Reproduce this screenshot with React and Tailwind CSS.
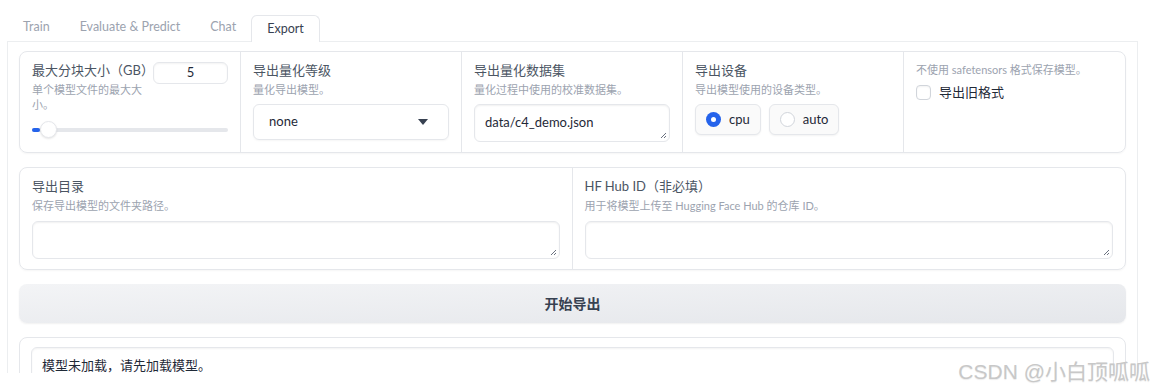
const font = "font-['Lato','Noto_Sans_CJK_SC',sans-serif]";

function Label({ title, info }) {
  return (
    <div>
      <p className="text-[13px] leading-[18px] text-[#4b5563]">{title}</p>
      {info && <p className="mt-[3px] text-[11px] leading-[15px] text-[#9ca3af]">{info}</p>}
    </div>
  );
}

function TextBox({ value, h = 'h-[38px]' }) {
  return (
    <div className={`relative ${h} rounded-md border border-[#e5e7eb] bg-white shadow-[inset_0_1px_2px_rgba(0,0,0,0.06)] px-[10px] flex items-center text-[13px] text-[#1f2937]`}>
      {value}
      <svg className="absolute right-[2px] bottom-[2px]" width="7" height="7" viewBox="0 0 7 7">
        <path d="M6 1L1 6M6 4L4 6" stroke="#6b7280" strokeWidth="1" />
      </svg>
    </div>
  );
}

function Radio({ label, checked }) {
  return (
    <div className="flex items-center gap-[8px] h-[31px] px-[10px] rounded-md border border-[#e5e7eb] bg-[#fafafa] shadow-[0_1px_2px_rgba(0,0,0,0.05)] text-[13px] text-[#1f2937]">
      {checked ? (
        <span className="w-[15px] h-[15px] rounded-full bg-[#2563eb] flex items-center justify-center">
          <span className="w-[5px] h-[5px] rounded-full bg-white" />
        </span>
      ) : (
        <span className="w-[15px] h-[15px] rounded-full border border-[#d1d5db] bg-white" />
      )}
      {label}
    </div>
  );
}

export default function App() {
  return (
    <div className={`relative w-[1159px] h-[391px] bg-white overflow-hidden ${font}`}>
      <div className="h-[373px] overflow-hidden">
        {/* tabs */}
        <div className="flex items-end h-[41px] pl-[8px]">
          <span className="px-[15px] h-[27px] flex items-center text-[12.5px] text-[#9ca3af]">Train</span>
          <span className="px-[15px] h-[27px] flex items-center text-[12.5px] text-[#9ca3af]">Evaluate &amp; Predict</span>
          <span className="px-[15px] h-[27px] flex items-center text-[12.5px] text-[#9ca3af]">Chat</span>
          <span className="relative top-[1px] px-[15px] h-[27px] flex items-center rounded-t-md border border-b-0 border-[#e5e7eb] bg-white text-[12.5px] text-[#374151]">Export</span>
        </div>

        <div className="ml-[7px] w-[1131px] h-[400px] border-l border-t border-r border-[#eceef0] px-[11px] pt-[9px] flex flex-col gap-[14px]">
          {/* row 1 */}
          <div className="grid grid-cols-5 h-[102px] rounded-lg border border-[#e5e7eb] shadow-[0_1px_2px_rgba(0,0,0,0.04)] divide-x divide-[#e5e7eb]">
            <div className="px-[12px] pt-[9px] flex flex-col">
              <div className="flex justify-between">
                <div className="w-[118px]">
                  <Label title="最大分块大小（GB）" info="单个模型文件的最大大小。" />
                </div>
                <div className="w-[75px] h-[22px] mt-[1px] rounded-md border border-[#e5e7eb] shadow-[inset_0_1px_2px_rgba(0,0,0,0.05)] flex items-center justify-center text-[13px] text-[#1f2937]">5</div>
              </div>
              <div className="relative mt-[16px] h-[4px] rounded-full bg-[#e5e7eb]">
                <div className="absolute left-0 top-0 h-[4px] w-[8px] rounded-full bg-[#2563eb]" />
                <div className="absolute left-[8px] top-[-7px] w-[17px] h-[17px] rounded-full bg-white border border-[#e5e7eb] shadow-[0_1px_2px_rgba(0,0,0,0.1)]" />
              </div>
            </div>
            <div className="px-[12px] pt-[9px] flex flex-col gap-[7px]">
              <Label title="导出量化等级" info="量化导出模型。" />
              <div className="h-[36px] rounded-md border border-[#e5e7eb] shadow-[0_1px_2px_rgba(0,0,0,0.04)] flex items-center justify-between pl-[15px] pr-[20px] text-[13px] text-[#1f2937]">
                none
                <svg width="10" height="6" viewBox="0 0 10 6"><path d="M0 0h10L5 6z" fill="#374151" /></svg>
              </div>
            </div>
            <div className="px-[12px] pt-[9px] flex flex-col gap-[7px]">
              <Label title="导出量化数据集" info="量化过程中使用的校准数据集。" />
              <TextBox value="data/c4_demo.json" />
            </div>
            <div className="px-[12px] pt-[9px] flex flex-col gap-[7px]">
              <Label title="导出设备" info="导出模型使用的设备类型。" />
              <div className="flex gap-[8px]">
                <Radio label="cpu" checked />
                <Radio label="auto" />
              </div>
            </div>
            <div className="px-[12px] pt-[10px] flex flex-col gap-[6px]">
              <p className="text-[11px] leading-[15px] text-[#9ca3af]">不使用 safetensors 格式保存模型。</p>
              <div className="flex items-center gap-[8px]">
                <span className="w-[15px] h-[15px] rounded-[4px] border border-[#d1d5db] bg-white shadow-[inset_0_1px_2px_rgba(0,0,0,0.05)]" />
                <span className="text-[13px] text-[#1f2937]">导出旧格式</span>
              </div>
            </div>
          </div>

          {/* row 2 */}
          <div className="grid grid-cols-2 h-[103px] rounded-lg border border-[#e5e7eb] shadow-[0_1px_2px_rgba(0,0,0,0.04)] divide-x divide-[#e5e7eb]">
            <div className="px-[12px] pt-[9px] flex flex-col gap-[8px]">
              <Label title="导出目录" info="保存导出模型的文件夹路径。" />
              <TextBox />
            </div>
            <div className="px-[12px] pt-[9px] flex flex-col gap-[8px]">
              <Label title="HF Hub ID（非必填）" info="用于将模型上传至 Hugging Face Hub 的仓库 ID。" />
              <TextBox />
            </div>
          </div>

          {/* button */}
          <div className="h-[39px] rounded-lg bg-gradient-to-br from-[#f3f4f6] to-[#e5e7eb] shadow-[0_1px_2px_rgba(0,0,0,0.06)] flex items-center justify-center text-[14px] font-bold text-[#374151]">
            开始导出
          </div>

          {/* output */}
          <div className="rounded-lg border border-[#e5e7eb] px-[11px] pt-[9px]">
            <div className="h-[60px] rounded-md border border-[#e5e7eb] shadow-[inset_0_1px_2px_rgba(0,0,0,0.05)] px-[10px] pt-[8px] text-[13px] leading-[18px] text-[#1f2937]">
              模型未加载，请先加载模型。
            </div>
          </div>
        </div>
      </div>

      <span className="absolute right-[9px] bottom-[7px] text-[21px] leading-[24px] text-[#c8c8c8] font-['Liberation_Sans','Noto_Sans_CJK_SC',sans-serif] [text-shadow:0_1px_1px_rgba(0,0,0,0.08)]">
        CSDN @小白顶呱呱
      </span>
    </div>
  );
}
